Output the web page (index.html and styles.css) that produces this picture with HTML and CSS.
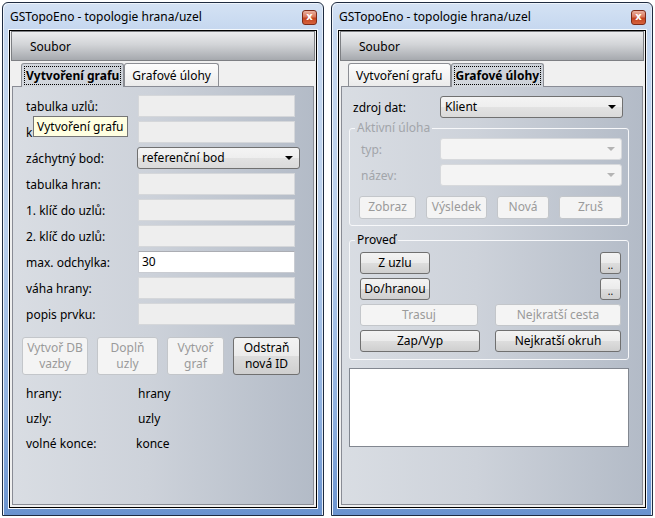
FILE: index.html
```html
<!DOCTYPE html>
<html lang="cs">

<head>
    <meta charset="UTF-8">
    <meta name="viewport" content="width=device-width, initial-scale=1.0">
    <title>GSTopoEno</title>
    <link rel="stylesheet" href="styles.css">
</head>

<body>
    <div class="desktop">

        <!-- okno 1: vytvoření grafu -->
        <div class="window">
            <div class="titlebar">
                <span>GSTopoEno - topologie hrana/uzel</span>
                <span class="close">x</span>
            </div>
            <div class="client">
                <div class="menubar"><span>Soubor</span></div>
                <div class="tabs">
                    <div class="tab on first"><span class="focus">Vytvoření grafu</span></div>
                    <div class="tab">Grafové úlohy</div>
                </div>
                <div class="panel">
                    <div class="form">
                        <span>tabulka uzlů:</span><div class="field off"></div>
                        <span>klíč k uzlům:</span><div class="field off"></div>
                        <span>záchytný bod:</span><div class="combo wide">referenční bod</div>
                        <span>tabulka hran:</span><div class="field off"></div>
                        <span>1. klíč do uzlů:</span><div class="field off"></div>
                        <span>2. klíč do uzlů:</span><div class="field off"></div>
                        <span>max. odchylka:</span><div class="field">30</div>
                        <span>váha hrany:</span><div class="field off"></div>
                        <span>popis prvku:</span><div class="field off"></div>
                    </div>
                    <div class="actions">
                        <div class="btn off w66">Vytvoř DB<br>vazby</div>
                        <div class="btn off w61">Doplň<br>uzly</div>
                        <div class="btn off w57">Vytvoř<br>graf</div>
                        <div class="btn w67">Odstraň<br>nová ID</div>
                    </div>
                    <div class="stats">
                        <span>hrany:</span><span>hrany</span>
                        <span>uzly:</span><span>uzly</span>
                        <span>volné konce:</span><span class="shift">konce</span>
                    </div>
                </div>
            </div>
            <!-- tooltip nad zakrytým popiskem -->
            <div class="tooltip">Vytvoření grafu</div>
        </div>

        <!-- okno 2: grafové úlohy -->
        <div class="window">
            <div class="titlebar">
                <span>GSTopoEno - topologie hrana/uzel</span>
                <span class="close">x</span>
            </div>
            <div class="client">
                <div class="menubar"><span>Soubor</span></div>
                <div class="tabs">
                    <div class="tab">Vytvoření grafu</div>
                    <div class="tab on"><span class="focus">Grafové úlohy</span></div>
                </div>
                <div class="panel tasks">
                    <div class="src">
                        <span>zdroj dat:</span><div class="combo">Klient</div>
                    </div>

                    <fieldset class="group off">
                        <legend>Aktivní úloha</legend>
                        <div class="row">
                            <span>typ:</span><div class="combo off"></div>
                        </div>
                        <div class="row">
                            <span>název:</span><div class="combo off"></div>
                        </div>
                        <div class="buttons">
                            <div class="btn off w57">Zobraz</div>
                            <div class="btn off w61">Výsledek</div>
                            <div class="btn off w52">Nová</div>
                            <div class="btn off w63">Zruš</div>
                        </div>
                    </fieldset>

                    <fieldset class="group">
                        <legend>Proveď</legend>
                        <div class="line">
                            <div class="btn w70">Z uzlu</div>
                            <div class="btn dots">..</div>
                        </div>
                        <div class="line">
                            <div class="btn w70">Do/hranou</div>
                            <div class="btn dots">..</div>
                        </div>
                        <div class="line">
                            <div class="btn off w118">Trasuj</div>
                            <div class="btn off w126">Nejkratší cesta</div>
                        </div>
                        <div class="line">
                            <div class="btn w120">Zap/Vyp</div>
                            <div class="btn w126">Nejkratší okruh</div>
                        </div>
                    </fieldset>

                    <div class="output"></div>
                </div>
            </div>
        </div>

    </div>
</body>

</html>
```

FILE: styles.css
```css
* {
    margin: 0;
    padding: 0;
    box-sizing: border-box;
}

body {
    background-color: #fff;
    font-family: "Noto Sans", "Segoe UI", sans-serif;
    font-size: 12px;
    color: #000;
    overflow: hidden;
}

.desktop {
    display: flex;
    gap: 7px;
    padding: 2px 0 0 2px;
}

/* okno */
.window {
    position: relative;
    width: 322px;
    height: 514px;
    border: 1px solid #1f2c41;
    border-radius: 6px 6px 0 0;
    background: linear-gradient(to bottom, #d4e2f4 0, #c5d7ef 28px, #b9cfec 45%, #8eb0df 80%, #6a93cf 100%);
    box-shadow: inset 1px 1px 0 #eef4fb, inset -1px 0 0 #e4edf8;
    padding: 0 6px 7px;
    display: flex;
    flex-direction: column;
}

.titlebar {
    height: 27px;
    display: flex;
    align-items: center;
    justify-content: space-between;
    padding-left: 1px;
}

.close {
    width: 15px;
    height: 15px;
    margin-top: 2px;
    border: 1px solid #7c2a18;
    border-radius: 3px;
    background: linear-gradient(to bottom, #eab09f 0, #d9775b 45%, #c2431f 55%, #d7623c 100%);
    color: #fff;
    font-family: "DejaVu Sans", sans-serif;
    font-weight: bold;
    font-size: 10px;
    line-height: 12px;
    text-align: center;
}

.client {
    flex: 1;
    border: 1px solid #000;
    box-shadow: 0 0 0 1px #f4f8fc;
    background-color: #f0f0f0;
    padding: 0 1px 2px;
    display: flex;
    flex-direction: column;
}

.menubar {
    height: 30px;
    border: 1px solid #7d7f83;
    background: linear-gradient(to bottom, #ebecee 0, #d2d4d7 45%, #a6a9ae 100%);
    display: flex;
    align-items: center;
    padding-left: 18px;
}

/* záložky */
.tabs {
    height: 25px;
    display: flex;
    align-items: flex-end;
    padding-left: 8px;
}

.tab {
    height: 23px;
    padding: 0 7px;
    border: 1px solid #8c8e94;
    border-bottom: none;
    border-radius: 3px 3px 0 0;
    background: linear-gradient(to bottom, #fdfdfd, #ebebeb);
    display: flex;
    align-items: center;
}

.tab.on {
    height: 24px;
    margin-bottom: -1px;
    padding: 0 2px;
    position: relative;
    z-index: 1;
    font-weight: bold;
    background: linear-gradient(to right, #d3d7dd, #ccd1d8);
}

.tab.first {
    margin-left: 2px;
}

.focus {
    border: 1px dotted #000;
    padding: 0 1px;
    line-height: 17px;
}

.panel {
    flex: 1;
    margin: 0 1px;
    border: 1px solid #898c95;
    background: linear-gradient(to right, #d9dde3 0, #cdd2da 45%, #b3bbc7 100%);
}

/* formulář */
.form {
    display: grid;
    grid-template-columns: 112px 157px;
    grid-auto-rows: 22px;
    row-gap: 4px;
    align-items: center;
    padding: 8px 0 0 13px;
}

.field {
    height: 22px;
    border: 1px solid #c9ccd2;
    border-top-color: #abadb3;
    background-color: #fff;
    padding-left: 3px;
    line-height: 20px;
}

.field.off {
    border-color: #d5d7da;
    background-color: #eeeeee;
}

.combo {
    height: 22px;
    border: 1px solid #707070;
    border-radius: 3px;
    background: linear-gradient(to bottom, #f4f4f4 0, #eeeeee 50%, #e2e2e2 51%, #dadada 100%);
    padding-left: 4px;
    line-height: 20px;
    position: relative;
}

.combo::after {
    content: "";
    position: absolute;
    right: 6px;
    top: 8px;
    border-left: 4px solid transparent;
    border-right: 4px solid transparent;
    border-top: 4px solid #000;
}

.combo.wide {
    width: 163px;
    margin-left: -1px;
}

.combo.off {
    border-color: #d7d9dc;
    background: #f4f4f4;
}

.combo.off::after {
    border-top-color: #b4b4b4;
}

/* tlačítka */
.btn {
    height: 22px;
    border: 1px solid #707070;
    border-radius: 3px;
    background: linear-gradient(to bottom, #f3f3f3 0, #ebebeb 50%, #dddddd 51%, #cfcfcf 100%);
    text-align: center;
    line-height: 20px;
}

.btn.off {
    border-color: #c3c6ca;
    background: #f4f4f4;
    color: #9a9a9a;
}

.w52 { width: 52px; }
.w57 { width: 57px; }
.w61 { width: 61px; }
.w63 { width: 63px; }
.w66 { width: 66px; }
.w67 { width: 67px; }
.w70 { width: 70px; }
.w118 { width: 118px; }
.w120 { width: 120px; }
.w126 { width: 126px; }

.btn.dots {
    width: 21px;
    line-height: 24px;
    font-size: 10px;
}

.actions {
    display: flex;
    gap: 9px;
    padding: 12px 0 0 9px;
}

.actions .btn {
    height: 38px;
    line-height: 16px;
    padding-top: 2px;
}

.stats {
    display: grid;
    grid-template-columns: 112px auto;
    grid-auto-rows: 25px;
    align-items: center;
    padding: 6px 0 0 13px;
}

.shift {
    margin-left: -2px;
}

/* druhá záložka */
.tasks {
    padding: 9px 13px 0 7px;
}

.src {
    display: grid;
    grid-template-columns: 87px 183px;
    align-items: center;
    padding-left: 4px;
}

.group {
    border: 1px solid #f7f8fa;
    border-radius: 3px;
    padding: 2px 6px 6px 9px;
    margin-top: 2px;
}

.group + .group {
    margin-top: 6px;
    padding-top: 4px;
    padding-bottom: 7px;
}

.group legend {
    margin-left: -4px;
    padding: 0 2px;
    line-height: 16px;
}

.group.off legend {
    color: #a2a5aa;
}

.row {
    display: grid;
    grid-template-columns: 81px 182px;
    align-items: center;
    margin-bottom: 4px;
}

.row span {
    padding-left: 2px;
    color: #a2a5aa;
}

.buttons {
    display: flex;
    justify-content: space-between;
    margin-top: 10px;
}

.buttons .btn {
    height: 23px;
}

.line {
    display: flex;
    justify-content: space-between;
    padding: 0 1px;
    margin-bottom: 4px;
}

.line:last-child {
    margin-bottom: 0;
}

.output {
    height: 79px;
    margin-top: 8px;
    border: 1px solid #828790;
    background-color: #fff;
}

/* bublina */
.tooltip {
    position: absolute;
    left: 30px;
    top: 113px;
    height: 21px;
    padding: 0 3px;
    border: 1px solid #767676;
    background-color: #ffffe1;
    line-height: 19px;
    z-index: 2;
}
```
